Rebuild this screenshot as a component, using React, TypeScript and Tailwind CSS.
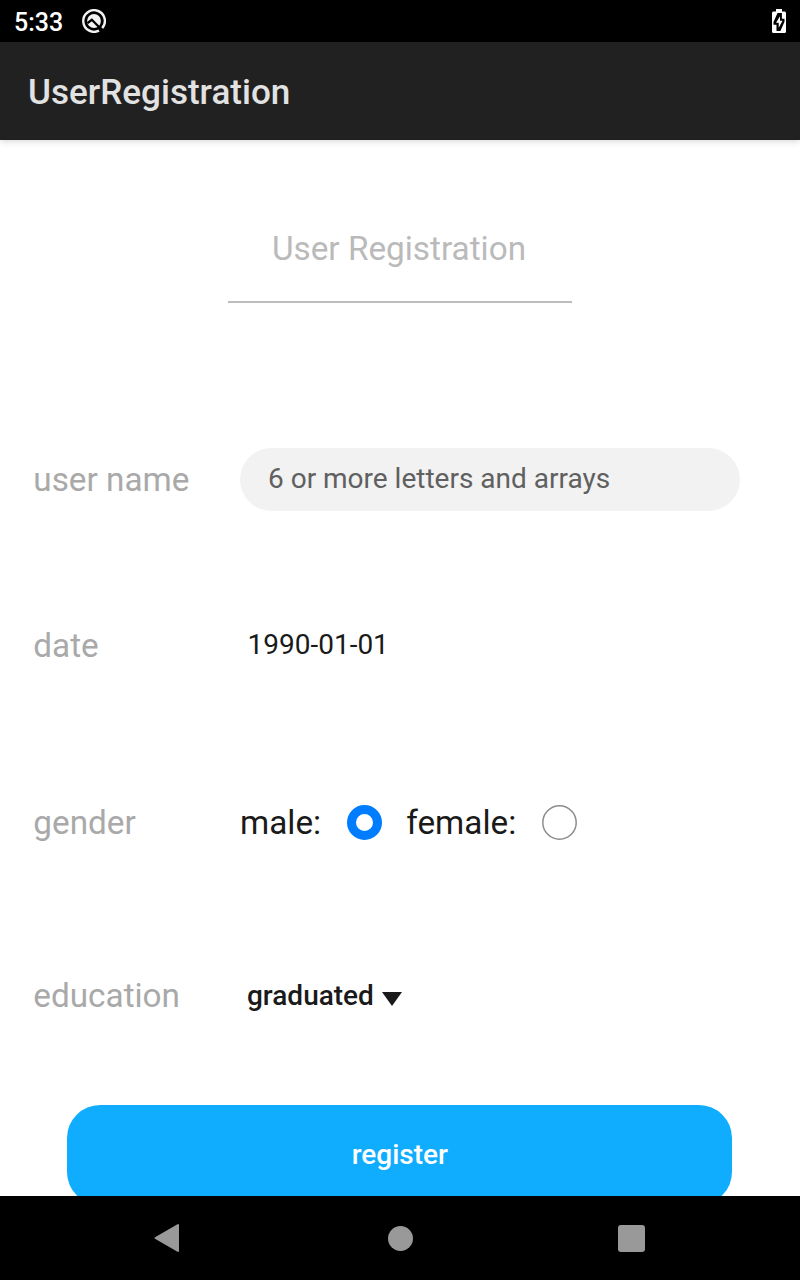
import React from "react";

function StatusBar() {
  return (
    <div className="flex h-[42px] shrink-0 items-center bg-black pr-[14px] pl-[14px] text-white">
      <span className="mt-[2px] w-[68px] text-[25px] leading-none font-medium">5:33</span>
      <svg width="24" height="24" viewBox="0 0 24 24" fill="none">
        <path d="M20.2 19.1A10.8 10.8 0 1 0 17 21.6" stroke="#f2f2f2" strokeWidth="2.4" />
        <circle cx="12" cy="12" r="6.9" fill="#f2f2f2" />
        <path d="M5.5 14.2L9.8 10.8L20 21" stroke="#000" strokeWidth="2.2" />
      </svg>
      <svg className="ml-auto" width="14" height="24" viewBox="0 0 14 24">
        <path d="M4 0h6v2.5h2.7Q14 2.5 14 4v18.5Q14 24 12.5 24h-11Q0 24 0 22.5V4Q0 2.5 1.3 2.5H4z" fill="#fff" />
        <path d="M5.5 4h4.4v5.8h2.6v3L8.4 22H4.5v-6.3H1.5V13z" fill="#000" />
        <path d="M8 7.2L4 13.8h2.7V18.8l3.9-7H8z" fill="#fff" />
      </svg>
    </div>
  );
}

function Row({ label, height, children }: { label: string; height: string; children: React.ReactNode }) {
  return (
    <div className={`flex items-center pl-[33.3px] ${height}`}>
      <span className="w-[206.7px] text-[33.3px] text-[#a9a9a9]">{label}</span>
      {children}
    </div>
  );
}

export default function App() {
  return (
    <div className="flex h-[1280px] w-[800px] flex-col overflow-hidden bg-white font-['Roboto',sans-serif]">
      <StatusBar />
      <header className="z-10 flex h-[98px] shrink-0 items-center bg-[#212121] pt-[2px] pl-7 text-[35.1px] font-medium text-[#e2e2e2] shadow-[0_1px_7px_rgba(0,0,0,0.18)]">
        UserRegistration
      </header>
      <main className="flex h-[1056px] shrink-0 flex-col overflow-hidden">
        <h1 className="mx-auto mt-[55px] flex h-[108px] w-[344px] shrink-0 items-center justify-center border-b-2 border-[#bdbdbd] pt-[2px] pr-[2px] text-[33.3px] text-[#bababa]">
          User Registration
        </h1>
        <Row label="user name" height="mt-[145px] h-[63px] shrink-0">
          <div className="flex h-[62.5px] w-[500px] items-center rounded-full bg-[#f2f2f2] pb-px pl-7 text-[28px] text-[#606060]">
            6 or more letters and arrays
          </div>
        </Row>
        <Row label="date" height="mt-[103px] h-[63px] shrink-0">
          <span className="pb-px pl-[7.5px] text-[28px] text-[#1a1a1a]">1990-01-01</span>
        </Row>
        <Row label="gender" height="mt-[114px] h-[63px] shrink-0">
          <span className="w-[107px] text-[33.3px] text-[#1a1a1a]">male:</span>
          <span className="size-[35px] rounded-full border-[9px] border-[#007dff]" />
          <span className="ml-[24.3px] w-[135.7px] text-[33.3px] text-[#1a1a1a]">female:</span>
          <svg width="35" height="35" viewBox="0 0 35 35">
            <circle cx="17.5" cy="17.5" r="16.7" fill="none" stroke="#8c8c8c" strokeWidth="1.5" />
          </svg>
        </Row>
        <Row label="education" height="mt-[110px] h-[63px] shrink-0">
          <span className="pl-[7px] text-[28px] font-medium text-[#1a1a1a]">graduated</span>
          <svg className="mt-[6px] ml-2" width="21" height="14" viewBox="0 0 21 14">
            <path d="M0 0h20L10 14z" fill="#1a1a1a" />
          </svg>
        </Row>
        <button className="mt-[77.7px] ml-[66.7px] h-[100px] w-[665.3px] shrink-0 rounded-[33px] bg-[#10adff] pl-px text-[28px] font-medium text-white">
          register
        </button>
      </main>
      <nav className="flex h-[84px] shrink-0 items-center bg-black pl-[154px]">
        <svg width="26" height="30" viewBox="0 0 26 30">
          <path d="M24 2v26L1.5 15z" fill="#999" stroke="#999" strokeWidth="2" strokeLinejoin="round" />
        </svg>
        <span className="ml-[208px] size-[25px] rounded-full bg-[#999]" />
        <span className="ml-[205px] size-[27px] rounded-[3px] bg-[#999]" />
      </nav>
    </div>
  );
}
